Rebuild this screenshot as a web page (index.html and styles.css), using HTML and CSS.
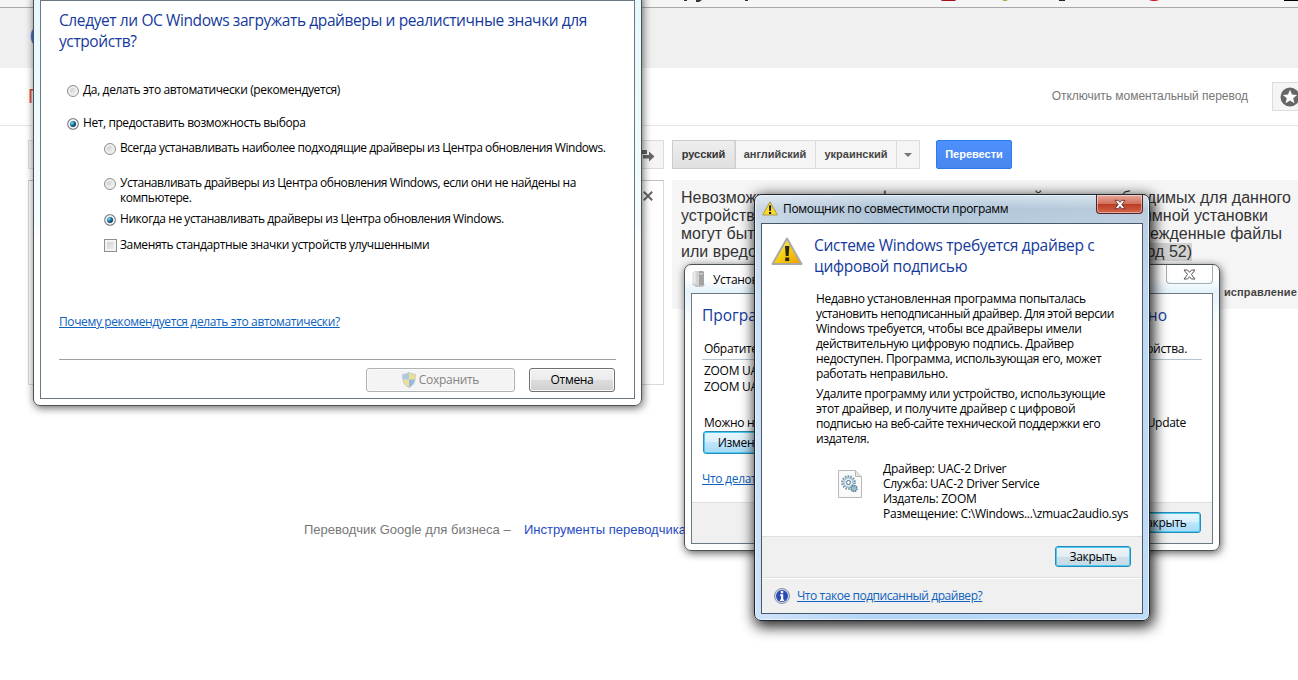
FILE: index.html
```html
<!DOCTYPE html>
<html lang="ru">
<head>
    <meta charset="UTF-8">
    <title>Переводчик Google</title>
    <link rel="stylesheet" href="styles.css">
</head>
<body>
    <div class="page">
        <!-- Панель закладок браузера -->
        <div class="bookmarks">
            <svg width="1298" height="7" viewBox="0 0 1298 7">
                <path d="M684 0h3v1h-3zM696 0h6l-3 2h-3zM745 0h3v1h-3z" fill="#333"/>
                <path d="M941 0h15q0 1-2 1h-11q-2 0-2-1z" fill="#a3101c"/>
                <path d="M1002 0h6l-2 1h-2z" fill="#9aa832"/>
                <path d="M1059 0h6v1h-6z" fill="#222"/>
                <path d="M1149 0h10l-3 1h-4z" fill="#cc2228"/>
                <path d="M1284 0h14v1h-14z" fill="#000"/>
            </svg>
        </div>
        <div class="header"><span class="logo">G</span></div>
        <div class="subheader">
            <span class="product">П</span>
            <span class="instant">Отключить моментальный перевод</span>
            <span class="star-btn">
                <svg width="20" height="20" viewBox="0 0 20 20">
                    <circle cx="10" cy="10" r="9.5" fill="#666"/>
                    <path d="M10 2.8l2 4.8 5.1.4-3.9 3.3 1.2 5-4.4-2.7-4.4 2.7 1.2-5L2.9 8l5.1-.4z" fill="#fff"/>
                </svg>
            </span>
        </div>
        <div class="langs">
            <div class="source-langs">
                <svg width="14" height="14" viewBox="0 0 14 14">
                    <path d="M0 1h6v4H0zM2 6h6V2.500l5.500 5-5.500 5V9.500H2z" fill="#666"/>
                </svg>
            </div>
            <div class="target-langs">
                <span class="lang active">русский</span>
                <span class="lang lang-en">английский</span>
                <span class="lang lang-uk">украинский</span>
                <span class="lang lang-more"><i class="arrow"></i></span>
            </div>
            <span class="translate-btn">Перевести</span>
        </div>
        <div class="panels">
            <div class="source">
                <svg width="10" height="10" viewBox="0 0 10 10">
                    <path d="M.8.800l8.400 8.400M9.200.800L.8 9.200" stroke="#666" stroke-width="2"/>
                </svg>
            </div>
            <div class="result">
                <p class="r1">Невозможно проверить цифровую подпись драйверов, необходимых для данного</p>
                <p class="r2"><span>устройств</span><span>ммной установки</span></p>
                <p class="r3"><span>могут быт</span><span>режденные файлы</span></p>
                <p class="r4"><span>или вредо</span><mark>од 52)</mark></p>
                <div class="suggest">исправление</div>
            </div>
        </div>
        <div class="footer">
            <span class="business">Переводчик Google для бизнеса –</span>
            <span class="tools">Инструменты переводчика</span>
        </div>
    </div>

    <!-- Окно параметров установки устройств -->
    <div class="window settings">
        <div class="client">
            <h1>Следует ли ОС Windows загружать драйверы и реалистичные значки для<br>устройств?</h1>
            <div class="option opt-auto"><i class="radio"></i><span>Да, делать это автоматически (рекомендуется)</span></div>
            <div class="option opt-manual"><i class="radio checked"></i><span>Нет, предоставить возможность выбора</span></div>
            <div class="option sub opt-always"><i class="radio"></i><span>Всегда устанавливать наиболее подходящие драйверы из Центра обновления Windows.</span></div>
            <div class="option sub opt-missing"><i class="radio"></i><span>Устанавливать драйверы из Центра обновления Windows, если они не найдены на<br>компьютере.</span></div>
            <div class="option sub opt-never"><i class="radio checked"></i><span>Никогда не устанавливать драйверы из Центра обновления Windows.</span></div>
            <div class="option sub opt-icons"><i class="checkbox"></i><span>Заменять стандартные значки устройств улучшенными</span></div>
            <a class="link why">Почему рекомендуется делать это автоматически?</a>
            <div class="buttons">
                <span class="btn disabled">
                    <svg width="14" height="16" viewBox="0 0 14 16">
                        <path d="M7 .5C5 1.800 3 2.300.7 2.300.5 8 1.500 13 7 15.500z" fill="#a9cbea"/>
                        <path d="M7 .5c2 1.300 4 1.800 6.300 1.800C13.500 8 12.500 13 7 15.500z" fill="#f0e08c"/>
                        <path d="M.8 7.500H7v8C3 13.600 1.200 11 .8 7.500z" fill="#f0e08c"/>
                        <path d="M7 7.500h6.200C12.800 11 11 13.600 7 15.500z" fill="#8fbce6"/>
                        <path d="M7 .5C5 1.800 3 2.300.7 2.300.5 8 1.500 13 7 15.500 12.500 13 13.500 8 13.300 2.300 11 2.300 9 1.800 7 .5z" fill="none" stroke="#c3c9cf"/>
                    </svg>
                    Сохранить
                </span>
                <span class="btn cancel">Отмена</span>
            </div>
        </div>
    </div>

    <!-- Окно установки драйверов -->
    <div class="window install">
        <div class="titlebar">
            <svg width="15" height="18" viewBox="0 0 15 18">
                <path d="M0 14l4 3h7l2-2-3-2z" fill="#c4c4c4"/>
                <path d="M1 2.500l3-1.500v14l-3-1.500z" fill="#ececec" stroke="#bbb" stroke-width=".5"/>
                <path d="M4 1h7l1 1v13l-8 1z" fill="#a2a2a2"/>
                <path d="M4 1h3v14.500H4z" fill="#d2d2d2"/>
                <path d="M7.500 3h3.500v1.500H7.500z" fill="#cfcfcf"/>
            </svg>
            <span class="caption">Установ</span>
            <span class="close-btn">
                <svg width="13" height="11" viewBox="0 0 13 11">
                    <path d="M1 1h3.500l2 2.300L8.500 1H12L8.500 5.500 12 10H8.500l-2-2.300-2 2.300H1l3.500-4.500z" fill="#fff" stroke="#555"/>
                </svg>
            </span>
        </div>
        <div class="client">
            <div class="main">
                <h1><span>Програ</span><span>но</span></h1>
                <p class="contact"><span>Обратите</span><span>ойства.</span></p>
                <p class="device">ZOOM UA</p>
                <p class="device">ZOOM UA</p>
                <p class="update"><span>Можно н</span><span>Update</span></p>
                <span class="btn default change">Измен</span>
                <a class="link what">Что делат</a>
            </div>
            <div class="bottom"><span class="btn default">Закрыть</span></div>
        </div>
    </div>

    <!-- Помощник по совместимости -->
    <div class="window assistant">
        <div class="titlebar">
            <svg width="16" height="15" viewBox="0 0 16 15">
                <path d="M8 .8L15.400 14H.6z" fill="#fbd926" stroke="#a89a55" stroke-linejoin="round"/>
                <path d="M7 4.500h2.200L8.800 10H7.400zM7 11h2.100v2H7z" fill="#111"/>
            </svg>
            <span class="caption">Помощник по совместимости программ</span>
            <span class="close-btn">
                <svg width="12" height="11" viewBox="0 0 13 11">
                    <path d="M1 1h3.500l2 2.300L8.500 1H12L8.500 5.500 12 10H8.500l-2-2.300-2 2.300H1l3.500-4.500z" fill="#fff" stroke="#6b2f2c"/>
                </svg>
            </span>
        </div>
        <div class="client">
            <div class="main">
                <svg class="warn" width="32" height="29" viewBox="0 0 32 29">
                    <defs>
                        <linearGradient id="warn" x1="0" y1="0" x2="1" y2="1">
                            <stop offset="0" stop-color="#fff27a"/>
                            <stop offset=".5" stop-color="#f6cf0c"/>
                            <stop offset="1" stop-color="#ee9d0d"/>
                        </linearGradient>
                    </defs>
                    <path d="M16 1.500L30.500 27h-29z" fill="#b9b9b4" stroke="#aaa9a4" stroke-width="2" stroke-linejoin="round"/>
                    <path d="M16 3.500L28.800 26H3.200z" fill="url(#warn)"/>
                    <path d="M14 9h4.400l-.8 10h-2.800zM14.200 20.500h4V24h-4z" fill="#2a2411"/>
                </svg>
                <div class="message">
                    <h1>Системе Windows требуется драйвер с<br>цифровой подписью</h1>
                    <p>Недавно установленная программа попыталась<br><span class="tight">установить неподписанный драйвер. Для этой версии</span><br>Windows требуется, чтобы все драйверы имели<br>действительную цифровую подпись. Драйвер<br>недоступен. Программа, использующая его, может<br>работать неправильно.</p>
                    <p>Удалите программу или устройство, использующие<br>этот драйвер, и получите драйвер с цифровой<br><span class="tight">подписью на веб-сайте технической поддержки его</span><br>издателя.</p>
                    <div class="driver">
                        <svg width="24" height="28" viewBox="0 0 24 28">
                            <path d="M.5.500h17l6 6v21H.5z" fill="#fafafa" stroke="#b9b9b9"/>
                            <path d="M17.500.500v6h6" fill="#e6e6e6" stroke="#b9b9b9"/>
                            <circle cx="10.500" cy="12.500" r="6.300" fill="none" stroke="#6d93a8" stroke-width="2" stroke-dasharray="1.600 1.200"/>
                            <circle cx="10.500" cy="12.500" r="4.800" fill="#dbe9f1" stroke="#7fa3b8"/>
                            <circle cx="10.500" cy="12.500" r="2" fill="#fff" stroke="#50768c"/>
                            <circle cx="16" cy="18.500" r="3" fill="#9dbccd" stroke="#55809a" stroke-width="1.500" stroke-dasharray="1.500 .8"/>
                        </svg>
                        <p>Драйвер: UAC-2 Driver<br>Служба: UAC-2 Driver Service<br>Издатель: ZOOM<br>Размещение: C:\Windows...\zmuac2audio.sys</p>
                    </div>
                </div>
            </div>
            <div class="bottom"><span class="btn default">Закрыть</span></div>
            <div class="help">
                <svg width="16" height="16" viewBox="0 0 16 16">
                    <circle cx="8" cy="8" r="7.500" fill="#d4dae6" stroke="#8790a5"/>
                    <circle cx="8" cy="8" r="6" fill="#2b4bb5"/>
                    <path d="M6.800 3h2.400v2.200H6.800zM6 6.300h3.200v5.200h1V13H6v-1.500h1V7.700H6z" fill="#fff"/>
                </svg>
                <a class="link">Что такое подписанный драйвер?</a>
            </div>
        </div>
    </div>
</body>
</html>
```

FILE: styles.css
```css
* {
    box-sizing: border-box;
}
body {
    margin: 0;
    width: 1298px;
    height: 680px;
    overflow: hidden;
    position: relative;
    background: #fff;
    font-family: "Liberation Sans", Arial, sans-serif;
    white-space: nowrap;
}
p, h1 {
    margin: 0;
    font-weight: normal;
}
svg {
    display: block;
    flex: none;
}

/* Страница переводчика */
.bookmarks {
    height: 8px;
    background: #f5f5f5;
    border-bottom: 1px solid #a9a9a9;
}
.header {
    height: 60px;
    padding: 9px 0 0 29px;
    background: #f0f0f0;
}
.logo {
    font-size: 34px;
    line-height: 38px;
    color: #3b78e7;
}
.subheader {
    display: flex;
    align-items: center;
    height: 58px;
    padding-left: 28px;
    border-bottom: 1px solid #e5e5e5;
}
.product {
    font-size: 20px;
    color: #dd4b39;
}
.instant {
    margin: 0 0 2px auto;
    font-size: 12px;
    color: #777;
    letter-spacing: -0.03px;
}
.star-btn {
    width: 26px;
    height: 29px;
    margin-left: 24px;
    padding: 4px 0 0 7px;
    background: #f5f5f5;
    border: 1px solid #ddd;
    border-right: 0;
    overflow: hidden;
}
.langs {
    display: flex;
    height: 29px;
    margin: 14px 0 0 28px;
    font-size: 11px;
    font-weight: bold;
    line-height: 27px;
    color: #444;
}
.source-langs {
    display: flex;
    justify-content: flex-end;
    align-items: center;
    width: 636px;
    padding: 3px 8px 0 0;
    background: #f5f5f5;
    border: 1px solid #dcdcdc;
}
.target-langs {
    display: flex;
    margin-left: 8px;
    background: #f5f5f5;
    border: 1px solid #dcdcdc;
}
.lang {
    width: 62px;
    text-align: center;
    border-right: 1px solid #dcdcdc;
}
.active {
    background: linear-gradient(#eee, #e0e0e0);
    box-shadow: 0 0 0 1px #ccc;
    color: #333;
}
.lang-en, .lang-uk {
    width: 81px;
}
.lang-more {
    display: flex;
    align-items: center;
    justify-content: center;
    width: 22px;
    border-right: 0;
}
.arrow {
    border: 4px solid transparent;
    border-top-color: #777;
    border-bottom: 0;
}
.translate-btn {
    width: 76px;
    margin-left: 16px;
    text-align: center;
    color: #fff;
    background: linear-gradient(#4d90fe, #4787ed);
    border: 1px solid #3079ed;
    border-radius: 2px;
}
.panels {
    display: flex;
    align-items: flex-start;
    margin: 11px 0 0 28px;
}
.source {
    display: flex;
    justify-content: flex-end;
    width: 636px;
    height: 205px;
    padding: 10px 10px 0 0;
    border: 1px solid #d9d9d9;
    border-top-color: #c0c0c0;
}
.result {
    width: 626px;
    height: 129px;
    margin-left: 8px;
    padding: 9px 0 0 9px;
    background: #f5f5f5;
    font-size: 16px;
    line-height: 18px;
    color: #333;
}
.r1 {
    width: 610px;
    text-align-last: justify;
}
.r2, .r3, .r4 {
    display: flex;
    justify-content: space-between;
}
.r2 {
    width: 587px;
}
.r3 {
    width: 601px;
}
.r4 {
    width: 511px;
}
mark {
    background: #d2d2d2;
    color: inherit;
}
.suggest {
    margin-top: 22px;
    font-size: 11px;
    font-weight: bold;
    letter-spacing: 0.15px;
    text-align: right;
    color: #444;
    padding-right: 1px;
}
.footer {
    display: flex;
    margin: 136px 0 0 304px;
    font-size: 13px;
    line-height: 18px;
    color: #777;
}
.business {
    width: 220px;
}
.tools {
    color: #1f4bc4;
}

/* Окна */
.window {
    position: absolute;
    border: 1px solid #4c5357;
    border-radius: 7px;
    font-family: "Open Sans", "Noto Sans", sans-serif;
    font-size: 12px;
    line-height: 15px;
    color: #000;
}
.client {
    background: #fff;
    border: 1px solid #6a7880;
}
.titlebar {
    display: flex;
}
.window h1 {
    font-size: 15.5px;
    line-height: 21px;
    color: #153a9c;
}
.link {
    color: #0e62c0;
    text-decoration: underline;
}
.btn {
    display: flex;
    align-items: center;
    justify-content: center;
    height: 24px;
    padding-bottom: 1px;
    border: 1px solid #707070;
    border-radius: 3px;
    background: linear-gradient(#f2f2f2, #ebebeb 50%, #dddddd 50%, #cfcfcf);
    box-shadow: inset 0 0 0 1px #fbfbfb;
    letter-spacing: -0.3px;
}
.default {
    width: 76px;
    height: 21px;
    padding: 0;
    border-color: #2c8bb4;
    background: linear-gradient(#eff4f7, #e2edf3 50%, #d0dfe8 50%, #c6dae6);
    box-shadow: inset 0 0 0 1px #48cdf4;
}
.disabled {
    color: #838383;
    border-color: #adb2b5;
    background: #f4f4f4;
    width: 149px;
    gap: 3px;
}
.cancel {
    width: 86px;
}
.radio {
    flex: none;
    width: 12px;
    height: 12px;
    margin-top: 2px;
    border: 1px solid #8e8f8f;
    border-radius: 50%;
    background: linear-gradient(135deg, #b9bdc2, #f4f4f4 80%);
    box-shadow: inset 0 0 0 2px #f0f0f0;
}
.checked {
    background: radial-gradient(circle at 4px 4px, #9be0f5 0, #1f80ad 2px, #0c3456 4px, #0c3456 100%);
}
.checkbox {
    flex: none;
    width: 13px;
    height: 13px;
    margin: 1px -1px 0 0;
    border: 1px solid #8e8f8f;
    background: linear-gradient(135deg, #c6cacf, #f6f6f6);
    box-shadow: inset 0 0 0 2px #f4f4f4;
}

.settings {
    left: 33px;
    top: -10px;
    width: 609px;
    height: 416px;
    padding: 9px 6px 6px;
    background: linear-gradient(#e6f8fd, #f4fcfe 230px, #fff 250px);
    box-shadow: 1px 2px 8px rgba(0, 0, 0, 0.6);
}
.settings .client {
    height: 399px;
    padding: 9px 18px 0;
}
.settings h1 {
    letter-spacing: -0.4px;
}
.option {
    display: flex;
    gap: 4px;
    margin-left: 8px;
}
.option span {
    margin: -1px 0 1px;
}
.sub {
    margin-left: 45px;
}
.opt-auto {
    margin-top: 31px;
    letter-spacing: -0.37px;
}
.opt-manual {
    margin-top: 18px;
    letter-spacing: -0.41px;
}
.opt-always {
    margin-top: 10px;
    letter-spacing: -0.45px;
}
.opt-missing {
    margin-top: 20px;
    letter-spacing: -0.45px;
}
.opt-never {
    margin-top: 6px;
    letter-spacing: -0.44px;
}
.opt-icons {
    margin-top: 11px;
    letter-spacing: -0.38px;
}
.why {
    display: block;
    margin-top: 61px;
    letter-spacing: -0.38px;
}
.buttons {
    display: flex;
    justify-content: flex-end;
    gap: 14px;
    margin-top: 30px;
    padding: 8px 1px 0 0;
    border-top: 1px solid #a0a0a0;
}

.install {
    left: 684px;
    top: 264px;
    width: 536px;
    height: 287px;
    padding: 0 6px 6px;
    background: linear-gradient(#fff, #fff 14px, #e4f3fa 26px, #fdfefe 60px);
    box-shadow: 1px 2px 8px rgba(0, 0, 0, 0.65);
    letter-spacing: -0.3px;
}
.install .titlebar {
    height: 28px;
    padding-left: 1px;
}
.install .titlebar > svg {
    margin-top: 5px;
}
.install .caption {
    margin: 7px 0 0 6px;
}
.close-btn {
    display: flex;
    align-items: center;
    justify-content: center;
    width: 47px;
    height: 19px;
    margin-left: auto;
    border: 1px solid #a5adb2;
    border-top: 0;
    border-radius: 0 0 4px 4px;
}
.install .client {
    height: 251px;
}
.install .main {
    height: 208px;
    padding: 11px 10px 0;
}
.install h1, .contact, .update {
    display: flex;
    justify-content: space-between;
}
.install h1 {
    width: 465px;
    letter-spacing: 0;
}
.contact {
    width: 500px;
    height: 20px;
    margin-top: 14px;
    padding: 0 15px 0 2px;
    border-bottom: 1px solid #b5c3cd;
    line-height: 18px;
}
.device {
    margin-left: 2px;
    line-height: 16px;
}
.contact + .device {
    margin-top: 3px;
}
.update {
    width: 482px;
    margin: 20px 0 0 2px;
}
.change {
    width: 66px;
    height: 23px;
    margin: 1px 0 17px 1px;
    background: linear-gradient(#e9f6fd, #d8effc 50%, #bee6fd 50%, #a8d9f4);
}
.bottom {
    display: flex;
    justify-content: flex-end;
    height: 41px;
    padding: 9px 11px 0;
    background: #f0f0f0;
    border-top: 1px solid #dfdfdf;
}
.install .bottom .btn {
    background: linear-gradient(#e9f6fd, #d8effc 50%, #bee6fd 50%, #a8d9f4);
}

.assistant {
    left: 754px;
    top: 194px;
    width: 396px;
    height: 427px;
    padding: 0 6px 6px;
    border-color: #20262c;
    background: linear-gradient(90deg, rgba(255, 255, 255, 0.35), rgba(255, 255, 255, 0) 30%, rgba(255, 255, 255, 0.15)), linear-gradient(#d3e0ec, #aec3d6 14px, #b3c8dc 28px, #b4d2f2 120px, #b5d5f6);
    box-shadow: inset 0 0 0 1px #e6f2fc, 2px 4px 14px 2px rgba(0, 0, 0, 0.85);
}
.assistant .titlebar {
    height: 28px;
    padding-left: 1px;
}
.assistant .titlebar > svg {
    margin-top: 6px;
}
.assistant .caption {
    margin: 6px 0 0 5px;
    letter-spacing: -0.33px;
}
.assistant .close-btn {
    border-color: #50242a;
    background: linear-gradient(#e7a99b, #d2705c 48%, #b93a22 50%, #d4674c);
    box-shadow: inset 0 0 0 1px rgba(255, 255, 255, 0.45);
}
.assistant .client {
    height: 391px;
    border-color: #46586b;
}
.assistant .main {
    display: flex;
    height: 312px;
    padding: 11px 0 0 9px;
    gap: 11px;
}
.warn {
    margin-top: 2px;
}
.message h1 {
    letter-spacing: -0.3px;
}
.message p {
    letter-spacing: -0.33px;
    margin: 14px 0 0 2px;
}
.message .tight {
    letter-spacing: -0.45px;
}
.message p + p {
    margin-top: 5px;
}
.driver {
    display: flex;
    gap: 21px;
    margin: 15px 0 0 24px;
}
.driver svg {
    margin-top: 9px;
}
.message .driver p {
    margin: 0;
    letter-spacing: -0.28px;
}
.help {
    display: flex;
    height: 36px;
    padding: 10px 0 0 12px;
    gap: 7px;
    background: #f0f0f0;
    border-top: 1px solid #dfdfdf;
    box-shadow: inset 0 1px 0 #fff;
    letter-spacing: -0.45px;
}
```
